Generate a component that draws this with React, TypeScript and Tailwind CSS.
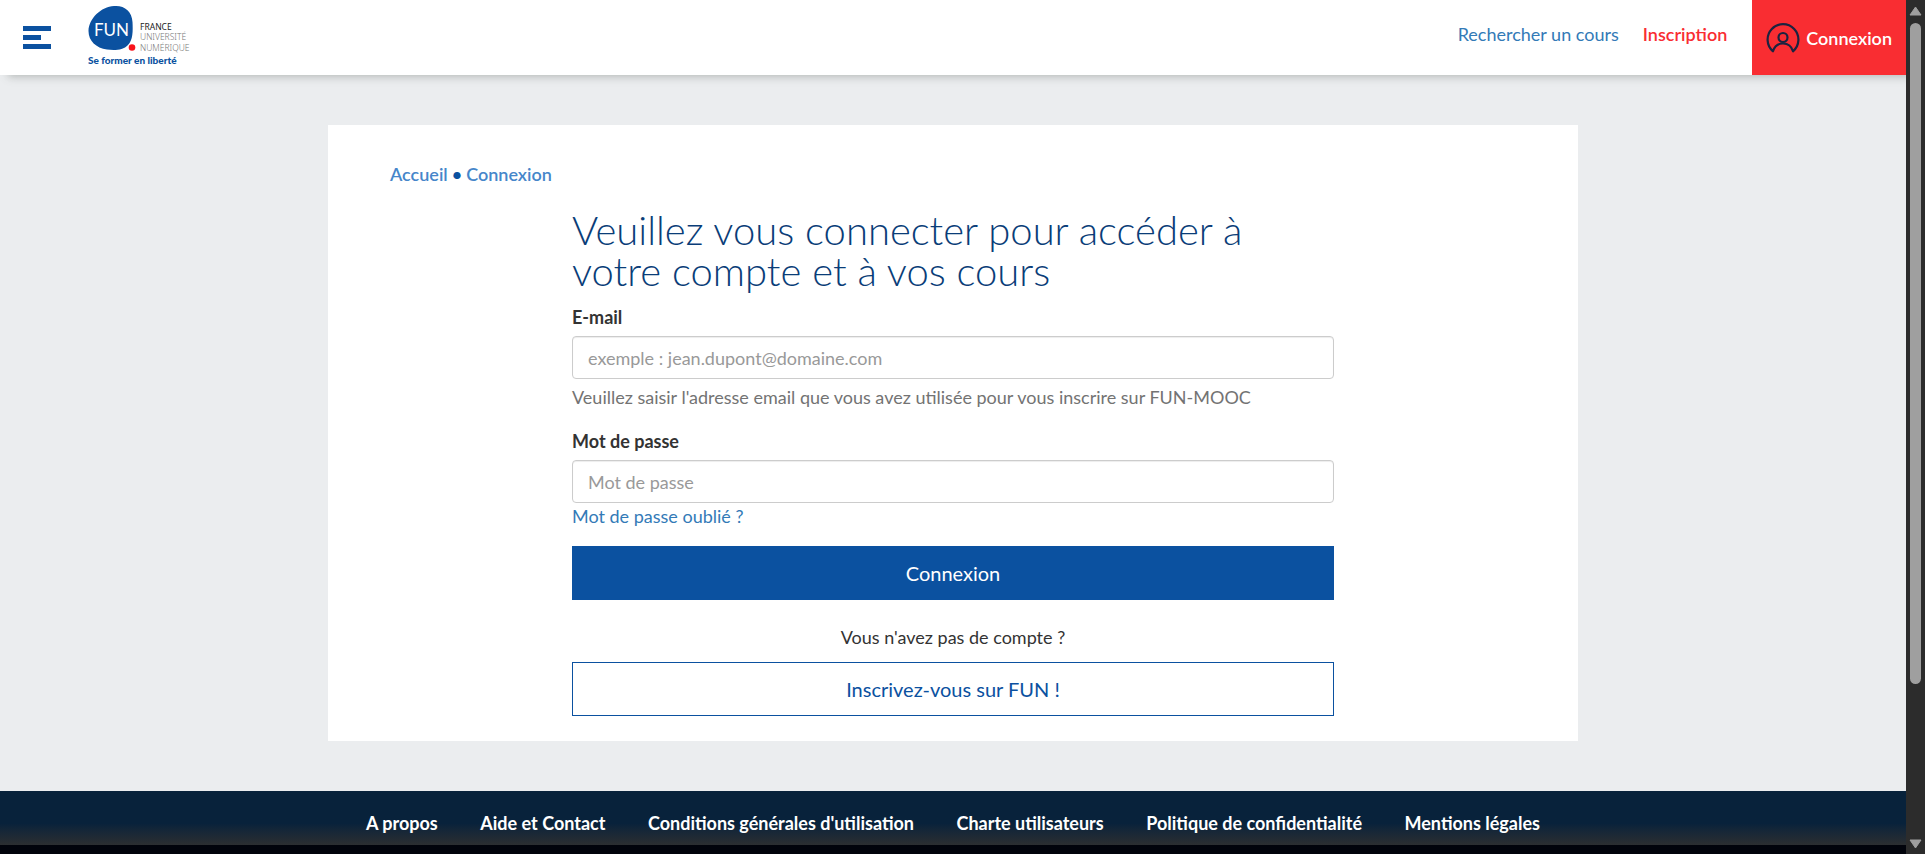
import { useState } from "react";

const footerLinks = [
  "A propos",
  "Aide et Contact",
  "Conditions générales d'utilisation",
  "Charte utilisateurs",
  "Politique de confidentialité",
  "Mentions légales",
];

function Logo() {
  return (
    <svg width="106" height="62" viewBox="0 0 106 62" role="img" aria-label="FUN - Se former en liberté">
      <path
        d="M26 2C36 1 44 7 44.500 18C45 27 45 36 40 41C35 46.500 26 46.500 19 45.500C8 44 0.500 37 0.500 27C1 14 13 3 26 2Z"
        fill="#0b51a0"
      />
      <circle cx="44" cy="43.500" r="3.300" fill="#f9131c" />
      <text x="6" y="32" fontSize="17" fill="#fff" fontFamily="Lato, sans-serif">FUN</text>
      <g fontFamily="'Noto Sans', sans-serif" fontSize="8.500">
        <text x="52" y="26" fill="#222">FRANCE</text>
        <text x="52" y="36" fill="#777" fontWeight="300">UNIVERSITÉ</text>
        <text x="52" y="46.500" fill="#777" fontWeight="300">NUMÉRIQUE</text>
      </g>
      <text x="0" y="60" fontSize="10" fontWeight="900" fill="#0b51a0" fontFamily="Lato, sans-serif">
        Se former en liberté
      </text>
    </svg>
  );
}

function UserIcon() {
  return (
    <svg width="34" height="30" viewBox="0 0 34 30" fill="none" stroke="#1c2340" strokeWidth="2.200" aria-hidden="true">
      <path d="M7 28.300A15.400 15.400 0 1 1 27 28.300C25.500 23 22 20.500 17 20.500S8.500 23 7 28.300Z" strokeLinejoin="round" />
      <circle cx="17" cy="14.500" r="4.500" />
    </svg>
  );
}

function Header() {
  return (
    <header className="relative z-10 flex h-[75px] shrink-0 items-stretch bg-white shadow-[6px_4px_8px_-2px_rgba(90,95,90,0.35)]">
      <button type="button" aria-label="Menu" className="ml-[23px] flex flex-col justify-center gap-1">
        <span className="h-[5px] w-7 bg-[#0b51a0]" />
        <span className="h-[5px] w-[18px] bg-[#0b51a0]" />
        <span className="h-[5px] w-7 bg-[#0b51a0]" />
      </button>
      <a href="#accueil" className="ml-[37px] mt-1">
        <Logo />
      </a>
      <nav className="ml-auto flex items-stretch leading-6">
        <a href="#cours" className="mr-6 mt-[22px] text-[#337ab7]">Rechercher un cours</a>
        <a href="#inscription" className="mr-[25px] mt-[22px] font-semibold text-[#f92d32]">Inscription</a>
        <a href="#connexion" className="flex items-center gap-1.5 bg-[#f92d32] pl-3.5 pr-3.5 font-semibold text-white">
          <UserIcon />
          <span>Connexion</span>
        </a>
      </nav>
    </header>
  );
}

const inputClass =
  "block h-[43px] w-full rounded border border-[#ccc] bg-white px-[15px] text-[#333] shadow-[inset_0_1px_1px_rgba(0,0,0,0.075)] outline-none placeholder:text-[#999] focus:border-[#66afe9]";

function LoginForm() {
  const [email, setEmail] = useState("");
  const [password, setPassword] = useState("");
  return (
    <form
      className="mx-auto mt-6 w-full max-w-[762px] leading-[26px] text-[#333]"
      onSubmit={(event) => event.preventDefault()}
    >
      <h1 className="text-[40px] font-light leading-[41px] text-[#0a3d78]">
        Veuillez vous connecter pour accéder à votre compte et à vos cours
      </h1>
      <label htmlFor="email" className="mb-1.5 mt-3 block font-bold">E-mail</label>
      <input
        id="email"
        type="email"
        placeholder="exemple : jean.dupont@domaine.com"
        value={email}
        onChange={(event) => setEmail(event.target.value)}
        className={inputClass}
      />
      <p className="mt-[5px] text-[#737373]">
        Veuillez saisir l'adresse email que vous avez utilisée pour vous inscrire sur FUN-MOOC
      </p>
      <label htmlFor="password" className="mb-1.5 mt-[18px] block font-bold">Mot de passe</label>
      <input
        id="password"
        type="password"
        placeholder="Mot de passe"
        value={password}
        onChange={(event) => setPassword(event.target.value)}
        className={inputClass}
      />
      <a href="#oubli" className="block w-fit text-[#337ab7]">Mot de passe oublié ?</a>
      <button type="submit" className="mt-[17px] block h-[54px] w-full bg-[#0b51a0] text-xl text-white">
        Connexion
      </button>
      <p className="mt-6 text-center">Vous n'avez pas de compte ?</p>
      <a
        href="#inscription"
        className="mt-3 flex h-[54px] items-center justify-center border border-[#0b51a0] text-xl text-[#0b51a0]"
      >
        Inscrivez-vous sur FUN !
      </a>
    </form>
  );
}

function Scrollbar() {
  return (
    <div aria-hidden="true" className="flex w-[19px] shrink-0 flex-col items-center bg-[#2c2c2c] pb-[5px] pt-1.5">
      <svg width="13" height="10" viewBox="0 0 13 10"><path d="M6.500 1L12 9H1Z" fill="#9f9f9f" stroke="#9f9f9f" strokeLinejoin="round" /></svg>
      <div className="mt-[7px] flex w-[11px] flex-1 flex-col">
        <div className="h-[81%] rounded-full bg-[#9f9f9f]" />
      </div>
      <svg width="13" height="10" viewBox="0 0 13 10"><path d="M6.500 9L12 1H1Z" fill="#9f9f9f" stroke="#9f9f9f" strokeLinejoin="round" /></svg>
    </div>
  );
}

export default function App() {
  return (
    <div className="flex h-screen overflow-hidden bg-[#ebedef] font-[Lato,sans-serif] text-lg">
      <div className="flex min-w-0 flex-1 flex-col overflow-hidden">
        <Header />
        <main className="shrink-0 py-[50px]">
          <section className="mx-auto max-w-[1250px] bg-white px-[62px] pb-[25px] pt-[37px]">
            <nav aria-label="Fil d'Ariane" className="flex gap-1 font-semibold leading-6 text-[#4686ca]">
              <a href="#accueil">Accueil</a>
              <span className="text-[#0b51a0]">•</span>
              <a href="#connexion">Connexion</a>
            </nav>
            <LoginForm />
          </section>
        </main>
        <footer className="flex shrink-0 justify-center bg-linear-to-b from-[#08223b] from-60% to-[#2b2e30] pb-[9px] pt-[19px]">
          <nav className="flex w-full max-w-[1174px] justify-between font-bold leading-[26px] text-white">
            {footerLinks.map((label) => (
              <a key={label} href="#pied">{label}</a>
            ))}
          </nav>
        </footer>
        <div className="flex-1 bg-[#01030b]" />
      </div>
      <Scrollbar />
    </div>
  );
}
